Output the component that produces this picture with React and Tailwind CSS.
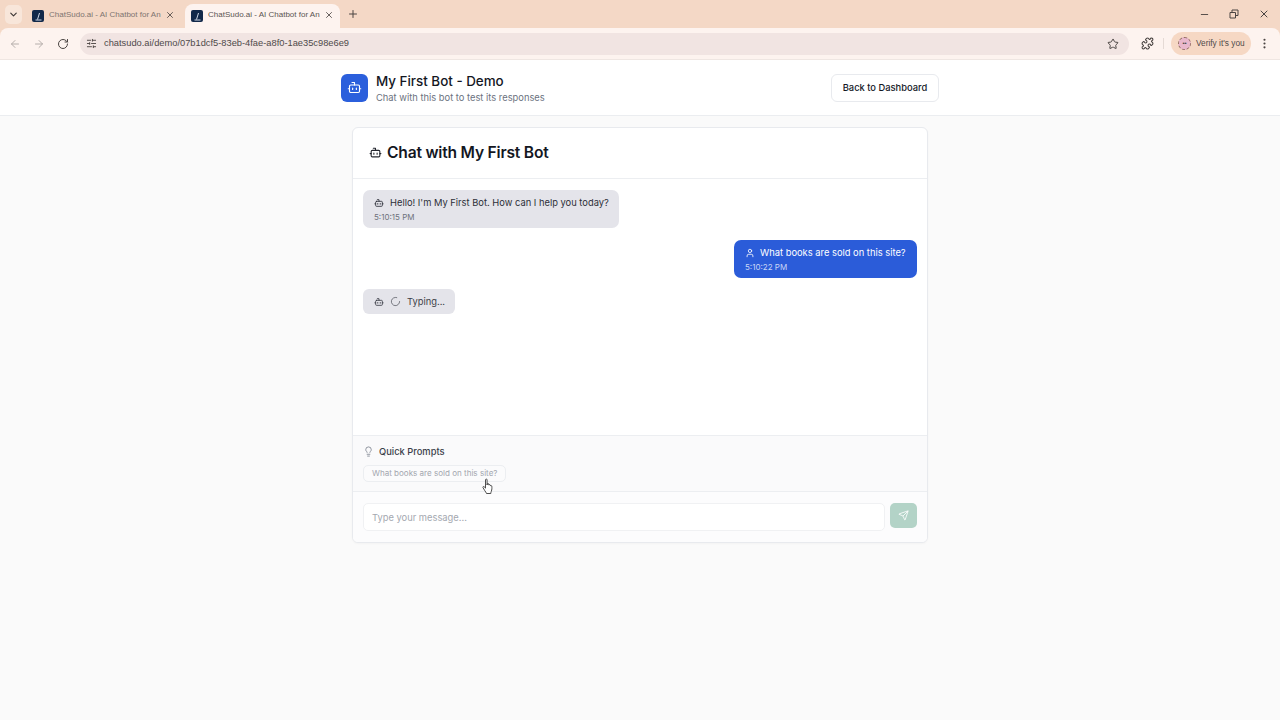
import React from "react";
import { Bot, User, Lightbulb, Send, LoaderCircle, ArrowLeft, ArrowRight, RotateCw, Star, Puzzle, X, Plus, ChevronDown, Minus, EllipsisVertical, SlidersHorizontal } from "lucide-react";

function Fav() {
  return (
    <div className="w-[12px] h-[12px] bg-[#12294a] rounded-[2px] flex items-center justify-center shrink-0">
      <svg width="9" height="9" viewBox="0 0 9 9" fill="none" stroke="#cfd8e6" strokeWidth="1"><path d="M5.500 1 3.500 7.500M1.500 8h6" /></svg>
    </div>
  );
}

function Tab({ active }) {
  return (
    <div className={`relative h-[24px] flex items-center pr-[6px] text-[8px] ${active ? "ml-[4px] w-[155px] pl-[6px] bg-[#fdf3ef] rounded-t-[8px] text-[#5a5452]" : "w-[159px] pl-[10px] text-[#7d7470]"}`}>
      <Fav />
      <span className="ml-[5px] flex-1 whitespace-nowrap mb-[2px]">ChatSudo.ai - AI Chatbot for An</span>
      <X size={10} strokeWidth={2} className="text-[#4a4442] shrink-0 mb-[2px]" />
    </div>
  );
}

function Chrome() {
  return (
    <div className="h-[60px] bg-[#f4d8c6] flex flex-col font-['Liberation_Sans',sans-serif]">
      <div className="h-[28px] flex items-end pl-[5px] relative">
        <div className="w-[17px] h-[19px] mb-[4px] rounded-[5px] bg-[#f8e6da] flex items-center justify-center">
          <ChevronDown size={11} strokeWidth={2.5} className="text-[#3c3735]" />
        </div>
        <Tab />
        <Tab active />
        <Plus size={12} strokeWidth={2} className="text-[#4a4442] ml-[7px] mb-[8px]" />
        <div className="flex-1" />
        <div className="flex items-center gap-[19px] pr-[10px] mb-[8px] text-[#4a4442]">
          <Minus size={11} />
          <svg width="10" height="10" viewBox="0 0 10 10" fill="none" stroke="currentColor"><path d="M1 3.500h5.500V9H1zM3 3.500V1h6v5.500H6.500" /></svg>
          <X size={12} />
        </div>
      </div>
      <div className="h-[32px] bg-[#fdf3ef] rounded-t-[8px] flex items-center border-b border-[#efe6e2]">
        <ArrowLeft size={12} className="text-[#b5aeab] ml-[9px]" />
        <ArrowRight size={12} className="text-[#b5aeab] ml-[12px]" />
        <RotateCw size={12} className="text-[#4a4442] ml-[12px]" />
        <div className="ml-[11px] w-[1049px] h-[22px] rounded-full bg-[#f1e4e2] flex items-center pl-[6px] pr-[10px]">
          <SlidersHorizontal size={11} className="text-[#4a4442]" />
          <span className="ml-[7px] text-[9.300px] text-[#4f4a4a] flex-1">chatsudo.ai/demo/07b1dcf5-83eb-4fae-a8f0-1ae35c98e6e9</span>
          <Star size={12} className="text-[#4a4442]" />
        </div>
        <Puzzle size={13} className="text-[#4a4442] ml-[12px]" />
        <div className="w-px h-[11px] bg-[#e5dad5] ml-[9px]" />
        <div className="ml-[7px] w-[80px] h-[23px] rounded-full bg-[#f6d8c4] flex items-center pl-[7px] gap-[5px]">
          <div className="w-[13px] h-[13px] rounded-full bg-[#e9b8cc] border border-dashed border-[#8f6a60] flex items-center justify-center text-[6px] text-[#444]">••</div>
          <span className="text-[8.300px] text-[#4f4a4a] whitespace-nowrap">Verify it's you</span>
        </div>
        <EllipsisVertical size={13} className="text-[#4a4442] ml-[7px]" />
      </div>
    </div>
  );
}

function Bubble({ icon: Icon, text, time, user }) {
  return (
    <div className={`rounded-[7px] pl-[11px] pr-[10px] h-[38px] pt-[6px] ${user ? "bg-[#2b5cd9] text-white" : "bg-[#e4e4ea] text-[#2c2f38]"}`}>
      <div className={`flex items-center h-[13px] text-[9.350px] ${user ? "gap-[5px]" : "gap-[6px]"}`}>
        <Icon size={10} strokeWidth={2} className="shrink-0" />
        <span className="whitespace-nowrap">{text}</span>
      </div>
      <div className={`text-[8px] mt-[2px] leading-[12px] ${user ? "text-[#c9d6f6]" : "text-[#6e727c]"}`}>{time}</div>
    </div>
  );
}

export default function App() {
  return (
    <div className="w-[1280px] h-[720px] overflow-hidden bg-[#fafafa] font-['Inter',sans-serif] relative">
      <Chrome />
      <header className="h-[56px] bg-white border-b border-[#ebedf0] flex justify-center">
        <div className="w-[598px] flex items-center justify-between">
          <div className="flex items-center gap-[8px]">
            <div className="w-[27px] h-[28px] rounded-[6px] bg-[#2b5fdc] flex items-center justify-center">
              <Bot size={15} strokeWidth={1.8} className="text-white" />
            </div>
            <div className="pt-[2px]">
              <div className="text-[13.400px] leading-[18px] font-medium text-[#14171f]">My First Bot - Demo</div>
              <div className="text-[9.350px] leading-[14px] mt-[1px] text-[#6b7280]">Chat with this bot to test its responses</div>
            </div>
          </div>
          <button className="w-[108px] h-[28px] pt-[1px] border border-[#e8eaee] rounded-[6px] bg-white text-[9.350px] font-medium text-[#14171f]">Back to Dashboard</button>
        </div>
      </header>
      <main className="flex justify-center pt-[11px]">
        <div className="w-[576px] h-[416px] bg-white border border-[#e8eaee] rounded-[6px] flex flex-col overflow-hidden shadow-[0_1px_2px_rgba(0,0,0,0.03)]">
          <div className="h-[51px] shrink-0 border-b border-[#eceef1] flex items-center pl-[16px] pb-[1px] gap-[5px]">
            <Bot size={13} strokeWidth={2} className="text-[#23262e]" />
            <h1 className="text-[15.600px] font-semibold text-[#14171f] tracking-[-0.2px]">Chat with My First Bot</h1>
          </div>
          <div className="h-[256px] shrink-0 px-[10px] pt-[11px] flex flex-col">
            <div className="self-start w-[256px]"><Bubble icon={Bot} text="Hello! I'm My First Bot. How can I help you today?" time="5:10:15 PM" /></div>
            <div className="self-end w-[183px] mt-[12px]"><Bubble user icon={User} text="What books are sold on this site?" time="5:10:22 PM" /></div>
            <div className="self-start w-[92px] h-[25px] mt-[11px] rounded-[6px] bg-[#e4e4ea] flex items-center pl-[11px] gap-[6px] text-[9.350px] text-[#3c3f48]">
              <Bot size={10} strokeWidth={2} />
              <LoaderCircle size={11} strokeWidth={1.4} />
              <span className="mt-[1px]">Typing...</span>
            </div>
          </div>
          <div className="h-[57px] shrink-0 border-t border-b border-[#eceef1] bg-[#fafafb] px-[10px] pt-[9px]">
            <div className="flex items-center gap-[5px] text-[9.350px] font-medium text-[#3b3f4a] h-[13px]">
              <Lightbulb size={11} strokeWidth={1.6} className="text-[#6b7280]" />
              <span>Quick Prompts</span>
            </div>
            <div className="mt-[7px] w-[143px] h-[17px] pb-[1px] border border-[#eceef1] rounded-[5px] bg-[#fbfbfc] flex items-center pl-[8px] text-[8.050px] text-[#a3a7af] whitespace-nowrap">What books are sold on this site?</div>
          </div>
          <div className="flex-1 px-[10px] pt-[11px] flex items-start gap-[5px] bg-[#fcfcfd]">
            <div className="w-[522px] h-[28px] pt-[2px] border border-[#f0f1f3] rounded-[5px] bg-white flex items-center pl-[8px] text-[9.350px] text-[#a4a8b0]">Type your message...</div>
            <div className="w-[27px] h-[25px] rounded-[5px] bg-[#b3d3c7] flex items-center justify-center">
              <Send size={11} strokeWidth={1.8} className="text-white" />
            </div>
          </div>
        </div>
      </main>
      <svg className="absolute left-[482px] top-[478px]" width="13" height="17" viewBox="0 0 13 17" fill="#fff" stroke="#3a3a3a" strokeWidth="0.9" strokeLinejoin="round">
        <path d="M3.500 1.800c0-1 1.600-1 1.600 0V7l.1-1c.3-.8 1.400-.7 1.500.1l.1 1c.2-.8 1.400-.7 1.500.1l.1.8c.3-.6 1.300-.5 1.400.3.2 1.500.2 3.300-.5 5-.3.8-.5 1.300-.5 2.200H4.500c-.3-1-1-1.800-1.700-2.800L1 9.600c-.5-.8.500-1.500 1.200-.8l1.300 1.300z" />
      </svg>
    </div>
  );
}
